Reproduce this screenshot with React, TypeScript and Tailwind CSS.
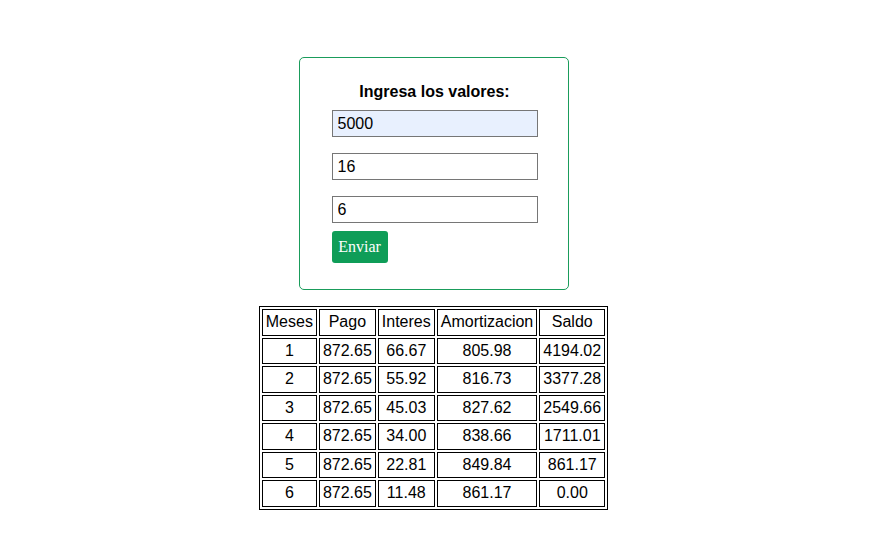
import React from 'react'

const rows = [
  ['1', '872.65', '66.67', '805.98', '4194.02'],
  ['2', '872.65', '55.92', '816.73', '3377.28'],
  ['3', '872.65', '45.03', '827.62', '2549.66'],
  ['4', '872.65', '34.00', '838.66', '1711.01'],
  ['5', '872.65', '22.81', '849.84', '861.17'],
  ['6', '872.65', '11.48', '861.17', '0.00'],
]

const cell = 'border border-black px-[3px] py-0 h-[26.5px] text-center font-normal leading-[normal]'

const App: React.FC = () => {
  return (
    <div className="flex flex-col items-center pt-[57px] pr-[5px] font-['Liberation_Sans',Arial,sans-serif] text-base text-black bg-white min-h-[537px]">
      <div className="w-[270px] h-[233px] border border-[#1a9c5b] rounded-[5px] flex flex-col items-center pt-[25px] pl-[2px]">
        <h3 className="font-bold text-base leading-[18px]">Ingresa los valores:</h3>
        <input
          className="mt-[9px] w-[206px] h-[27px] border border-[#767676] bg-[#e8f0fe] px-[5px] text-base leading-[normal] outline-none"
          defaultValue="5000"
        />
        <input
          className="mt-[16px] w-[206px] h-[27px] border border-[#767676] bg-white px-[5px] text-base leading-[normal] outline-none"
          defaultValue="16"
        />
        <input
          className="mt-[16px] w-[206px] h-[27px] border border-[#767676] bg-white px-[5px] text-base leading-[normal] outline-none"
          defaultValue="6"
        />
        <div className="w-[206px] mt-[8px]">
          <button className="w-[56px] h-[32px] rounded-[3px] bg-[#0f9d58] text-white font-['Liberation_Serif','Times_New_Roman',serif] text-base">
            Enviar
          </button>
        </div>
      </div>
      <table className="mt-[16px] border border-black border-separate border-spacing-[2px]">
        <thead>
          <tr>
            {['Meses', 'Pago', 'Interes', 'Amortizacion', 'Saldo'].map((h) => (
              <th key={h} className={cell}>{h}</th>
            ))}
          </tr>
        </thead>
        <tbody>
          {rows.map((r) => (
            <tr key={r[0]}>
              {r.map((v, i) => (
                <td key={i} className={i === 4 ? cell + ' min-w-[66px]' : cell}>{v}</td>
              ))}
            </tr>
          ))}
        </tbody>
      </table>
    </div>
  )
}

export default App
